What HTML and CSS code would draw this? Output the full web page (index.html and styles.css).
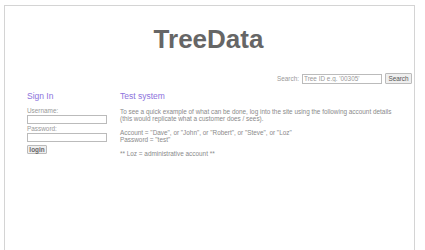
FILE: index.html
```html
<!DOCTYPE html>
<html>
<head>
<meta charset="utf-8">
<link rel="stylesheet" href="styles.css">
</head>
<body>
<div class="page">
  <h1 class="title">TreeData</h1>
  <div class="search">
    <span class="search-label">Search:</span>
    <input class="search-input" type="text" placeholder="Tree ID e.g. '00305'">
    <button class="btn search-btn">Search</button>
  </div>
  <div class="cols">
    <div class="left">
      <h2 class="heading">Sign In</h2>
      <div class="label first">Username:</div>
      <input class="field" type="text">
      <div class="label">Password:</div>
      <input class="field" type="password">
      <button class="btn login-btn">login</button>
    </div>
    <div class="right">
      <h2 class="heading">Test system</h2>
      <p class="para first">To see a quick example of what can be done, log into the site using the following account details<br>(this would replicate what a customer does / sees).</p>
      <p class="para">Account = "Dave", or "John", or "Robert", or "Steve", or "Loz"<br>Password = "test"</p>
      <p class="para">** Loz = administrative account **</p>
    </div>
  </div>
</div>
</body>
</html>
```
FILE: styles.css
```css
html, body {
  margin: 0;
  padding: 0;
  background: #fff;
  font-family: "Liberation Sans", Arial, sans-serif;
  overflow: hidden;
}
.page {
  margin: 5px 10px 0 4px;
  border: 1px solid #d4d4d4;
  border-bottom: none;
  height: 245px;
  box-sizing: border-box;
  padding: 18px 2px 0 22px;
}
.title {
  margin: 0 0 0 -22px;
  text-align: center;
  font-size: 26px;
  line-height: 30px;
  font-weight: bold;
  color: #666;
}
.search {
  margin-top: 19px;
  height: 11px;
  display: flex;
  justify-content: flex-end;
  align-items: center;
  gap: 2px;
}
.search-label {
  font-size: 6.4px;
  color: #999;
  margin-right: 1px;
}
.search-input {
  box-sizing: border-box;
  width: 80px;
  height: 10px;
  padding: 0 1px;
  border: 1px solid #bbb;
  font-family: inherit;
  font-size: 6.4px;
  color: #888;
  outline: none;
}
.search-input::placeholder {
  color: #999;
}
.btn {
  box-sizing: border-box;
  font-family: inherit;
  font-size: 6.4px;
  color: #555;
  background: #efefef;
  border: 1px solid #bbb;
  border-radius: 1px;
  padding: 0;
}
.search-btn {
  width: 27px;
  height: 11px;
  margin-left: 1px;
}
.cols {
  display: flex;
  margin-top: 7px;
}
.left {
  width: 80px;
  display: flex;
  flex-direction: column;
  align-items: flex-start;
}
.right {
  margin-left: 13px;
}
.heading {
  margin: 0;
  font-size: 8.5px;
  line-height: 10px;
  font-weight: normal;
  color: #8c72dc;
}
.label {
  font-size: 6.4px;
  line-height: 7px;
  color: #999;
  margin-top: 1px;
}
.label.first {
  margin-top: 6px;
}
.field {
  box-sizing: border-box;
  width: 80px;
  height: 9px;
  margin: 1px 0 0 0;
  border: 1px solid #bbb;
  padding: 0;
  outline: none;
}
.login-btn {
  width: 20px;
  height: 9px;
  margin-top: 3px;
  font-weight: bold;
  color: #666;
}
.para {
  margin: 7px 0 0 0;
  font-size: 6.4px;
  line-height: 7px;
  color: #8a8a8a;
}
.para.first {
  margin-top: 6.5px;
}
```
